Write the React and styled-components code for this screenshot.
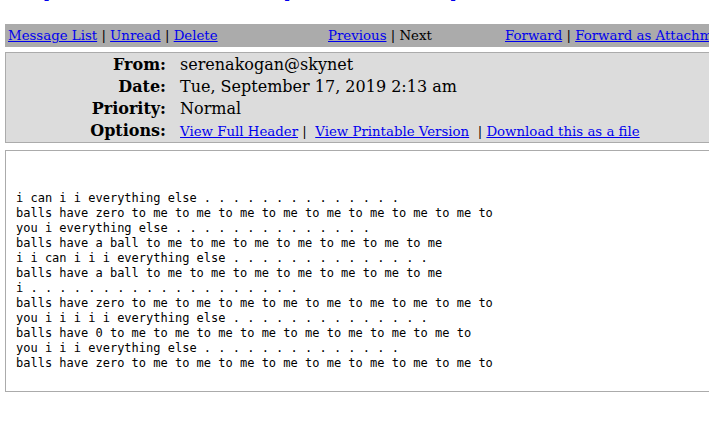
import React from 'react';
import styled, { createGlobalStyle } from 'styled-components';

const GlobalStyle = createGlobalStyle`
  html, body {
    margin: 0;
    padding: 0;
    overflow: hidden;
    background: #ffffff;
  }
  body {
    font-family: "DejaVu Serif", serif;
    color: #000000;
  }
  a {
    color: #0000ee;
  }
`;

const Page = styled.div`
  width: 900px;
  margin-top: -18px;
`;

const TopNav = styled.div`
  display: flex;
  gap: 15.3px;
  padding-left: 7px;
  font-size: 16px;
  line-height: 19px;
`;

const ActionBar = styled.div`
  display: grid;
  grid-template-columns: 320px 177px 1fr;
  margin: 23px 0 0 5px;
  padding: 3.5px 3px 4px;
  background: #ababab;
  font-size: 13.33px;
  white-space: nowrap;
`;

const HeaderBox = styled.div`
  display: grid;
  grid-template-columns: 160px 1fr;
  grid-auto-rows: 22px;
  column-gap: 14px;
  align-items: baseline;
  margin: 5px 0 0 5px;
  padding: 1.5px 0 0;
  background: #dcdcdc;
  border: 1px solid #ababab;
  border-right: none;
`;

const Label = styled.div`
  text-align: right;
  font-weight: bold;
  font-size: 16px;
  line-height: 22px;
`;

const Value = styled.div`
  font-size: ${(p) => (p.$small ? '13.33px' : '16px')};
  line-height: 22px;
  white-space: pre;
`;

const BodyBox = styled.div`
  margin: 6.5px 0 0 5px;
  padding: 40px 10px 20px;
  border: 1px solid #ababab;
  border-right: none;
  background: #ffffff;
`;

const MessageText = styled.pre`
  margin: 0;
  font-family: "DejaVu Sans Mono", monospace;
  font-size: 12px;
  line-height: 15px;
`;

const dots = (n) => Array(n).fill('.').join(' ');
const toMe = (n) => Array(n).fill('to me').join(' ');

const lines = [
  'i can i i everything else ' + dots(14),
  'balls have zero ' + toMe(8) + ' to',
  'you i everything else ' + dots(14),
  'balls have a ball ' + toMe(7),
  'i i can i i i everything else ' + dots(14),
  'balls have a ball ' + toMe(7),
  'i ' + dots(19),
  'balls have zero ' + toMe(8) + ' to',
  'you i i i i i everything else ' + dots(14),
  'balls have 0 ' + toMe(8) + ' to',
  'you i i i everything else ' + dots(14),
  'balls have zero ' + toMe(8) + ' to',
];

const topLinks = ['Compose', 'Addresses', 'Folders', 'Options', 'Search', 'Help'];

export default function App() {
  return (
    <Page>
      <GlobalStyle />
      <TopNav>
        {topLinks.map((l) => (
          <a key={l} href="#">{l}</a>
        ))}
      </TopNav>

      <ActionBar>
        <div>
          <a href="#">Message List</a> | <a href="#">Unread</a> | <a href="#">Delete</a>
        </div>
        <div>
          <a href="#">Previous</a> | Next
        </div>
        <div>
          <a href="#">Forward</a> | <a href="#">Forward as Attachment</a> | <a href="#">Reply</a> | <a href="#">Reply All</a>
        </div>
      </ActionBar>

      <HeaderBox>
        <Label>From:</Label>
        <Value>serenakogan@skynet</Value>
        <Label>Date:</Label>
        <Value>Tue, September 17, 2019 2:13 am</Value>
        <Label>Priority:</Label>
        <Value>Normal</Value>
        <Label>Options:</Label>
        <Value $small>
          <a href="#">View Full Header</a>{' |  '}
          <a href="#">View Printable Version</a>{'  | '}
          <a href="#">Download this as a file</a>
        </Value>
      </HeaderBox>

      <BodyBox>
        <MessageText>{lines.join('\n')}</MessageText>
      </BodyBox>
    </Page>
  );
}
